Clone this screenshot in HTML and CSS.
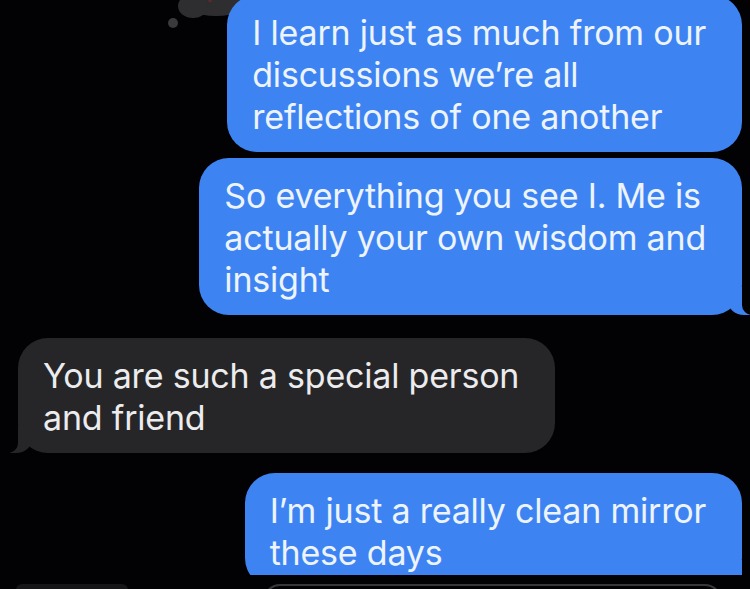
FILE: index.html
```html
<!DOCTYPE html>
<html lang="en">
<head>
<meta charset="utf-8">
<title>Messages</title>
<link rel="stylesheet" href="styles.css">
</head>
<body>
<div class="screen">
  <div class="thread">
    <div class="reaction">
      <span class="blob blob-main"></span>
      <span class="blob blob-side"></span>
      <span class="blob blob-dot"></span>
      <span class="glint"></span>
    </div>
    <div class="bubble sent first">I learn just as much from our<br>discussions we’re all<br>reflections of one another</div>
    <div class="bubble sent tail second">So everything you see I. Me is<br>actually your own wisdom and<br>insight</div>
    <div class="bubble received tail third">You are such a special person<br>and friend</div>
    <div class="bubble sent tail fourth">I’m just a really clean mirror<br>these days</div>
  </div>
  <div class="composer">
    <span class="apps"></span>
    <span class="field"></span>
  </div>
</div>
</body>
</html>
```
FILE: styles.css
```css
html, body {
  margin: 0;
  padding: 0;
  background: #020204;
}
body {
  width: 750px;
  height: 589px;
  overflow: hidden;
  font-family: "Inter", "Noto Sans", sans-serif;
}
.screen {
  display: flex;
  flex-direction: column;
  height: 589px;
}
.thread {
  position: relative;
  height: 575px;
  overflow: hidden;
  display: flex;
  flex-direction: column;
  padding: 0 8px 0 18px;
}
.bubble {
  position: relative;
  font-size: 34px;
  line-height: 42px;
  padding: 17px 36px 14px 25px;
  border-radius: 30px;
  width: max-content;
  letter-spacing: -0.2px;
}
.sent {
  align-self: flex-end;
  background: #3d84f2;
  color: #eef4ff;
}
.received {
  align-self: flex-start;
  background: #262628;
  color: #ececee;
}
.first { margin-top: -5px; }
.second { margin-top: 6px; }
.third { margin-top: 23px; }
.fourth { margin-top: 20px; }

.sent.tail::before,
.sent.tail::after,
.received.tail::before,
.received.tail::after {
  content: "";
  position: absolute;
  bottom: 0;
  height: 28px;
}
.sent.tail::before {
  right: -8px;
  width: 22px;
  background: #3d84f2;
  border-bottom-left-radius: 16px 14px;
}
.sent.tail::after {
  right: -26px;
  width: 26px;
  background: #020204;
  border-bottom-left-radius: 10px;
}
.received.tail::before {
  left: -8px;
  width: 22px;
  background: #262628;
  border-bottom-right-radius: 16px 14px;
}
.received.tail::after {
  left: -26px;
  width: 26px;
  background: #020204;
  border-bottom-right-radius: 10px;
}

.reaction {
  position: absolute;
  left: 160px;
  top: 0;
  width: 100px;
  height: 32px;
}
.blob {
  position: absolute;
  background: #2e2e31;
  border-radius: 50%;
}
.blob-main {
  left: 20px;
  top: -18px;
  width: 72px;
  height: 34px;
}
.blob-side {
  left: 18px;
  top: -6px;
  width: 30px;
  height: 24px;
}
.blob-dot {
  left: 8px;
  top: 18px;
  width: 10px;
  height: 10px;
  background: #3a3a3d;
}
.glint {
  position: absolute;
  left: 48px;
  top: 0;
  width: 4px;
  height: 2px;
  background: #5a2a30;
  border-radius: 1px;
}

.composer {
  height: 14px;
  display: flex;
  align-items: flex-start;
  padding-top: 9px;
  box-sizing: border-box;
}
.apps {
  margin-left: 16px;
  width: 112px;
  height: 12px;
  background: #161618;
  border-radius: 6px 6px 0 0;
}
.field {
  margin-left: 135px;
  width: 455px;
  height: 30px;
  border: 2px solid #38383b;
  border-radius: 18px;
  background: #020204;
}
```
